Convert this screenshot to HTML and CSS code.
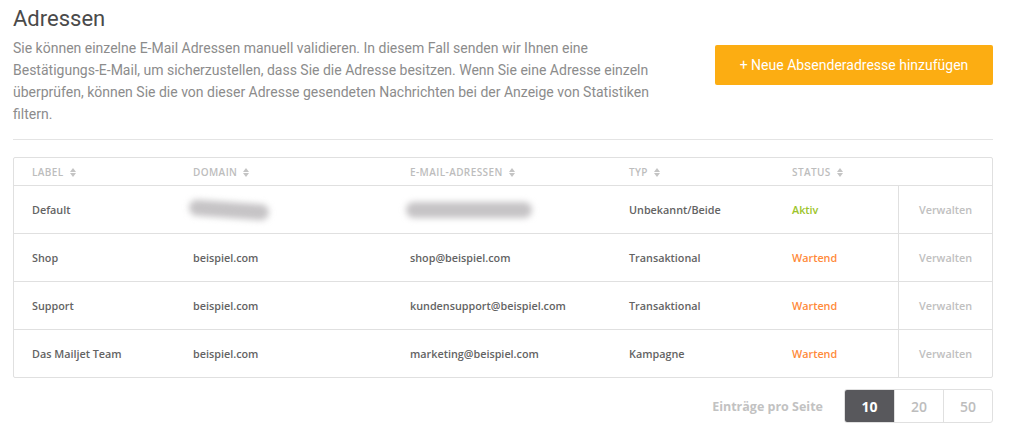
FILE: index.html
```html
<!DOCTYPE html>
<html lang="de">
<head>
<meta charset="utf-8">
<link rel="stylesheet" href="styles.css">
</head>
<body>
<div class="page">
  <div class="intro">
    <div class="intro-text">
      <h1 class="title">Adressen</h1>
      <p class="desc">Sie können einzelne E-Mail Adressen manuell validieren. In diesem Fall senden wir Ihnen eine<br>Bestätigungs-E-Mail, um sicherzustellen, dass Sie die Adresse besitzen. Wenn Sie eine Adresse einzeln<br>überprüfen, können Sie die von dieser Adresse gesendeten Nachrichten bei der Anzeige von Statistiken<br>filtern.</p>
    </div>
    <button class="add-btn">+ Neue Absenderadresse hinzufügen</button>
  </div>
  <hr class="sep">
  <div class="table">
    <div class="row head">
      <div class="cell">LABEL <span class="sort"></span></div>
      <div class="cell">DOMAIN <span class="sort"></span></div>
      <div class="cell">E-MAIL-ADRESSEN <span class="sort"></span></div>
      <div class="cell">TYP <span class="sort"></span></div>
      <div class="cell">STATUS <span class="sort"></span></div>
      <div class="cell"></div>
    </div>
    <div class="row">
      <div class="cell">Default</div>
      <div class="cell"><span class="blur blur-domain"></span></div>
      <div class="cell"><span class="blur blur-mail"></span></div>
      <div class="cell">Unbekannt/Beide</div>
      <div class="cell ok">Aktiv</div>
      <div class="cell action">Verwalten</div>
    </div>
    <div class="row">
      <div class="cell">Shop</div>
      <div class="cell">beispiel.com</div>
      <div class="cell">shop@beispiel.com</div>
      <div class="cell">Transaktional</div>
      <div class="cell wait">Wartend</div>
      <div class="cell action">Verwalten</div>
    </div>
    <div class="row">
      <div class="cell">Support</div>
      <div class="cell">beispiel.com</div>
      <div class="cell">kundensupport@beispiel.com</div>
      <div class="cell">Transaktional</div>
      <div class="cell wait">Wartend</div>
      <div class="cell action">Verwalten</div>
    </div>
    <div class="row">
      <div class="cell">Das Mailjet Team</div>
      <div class="cell">beispiel.com</div>
      <div class="cell">marketing@beispiel.com</div>
      <div class="cell">Kampagne</div>
      <div class="cell wait">Wartend</div>
      <div class="cell action">Verwalten</div>
    </div>
  </div>
  <div class="pager">
    <span class="pager-label">Einträge pro Seite</span>
    <div class="pager-group">
      <span class="pg active">10</span>
      <span class="pg">20</span>
      <span class="pg">50</span>
    </div>
  </div>
</div>
</body>
</html>
```
FILE: styles.css
```css
* { box-sizing: border-box; }
html, body { margin: 0; background: #fff; }
.page {
  padding: 0 18px 0 13px;
  font-family: Roboto, "Liberation Sans", sans-serif;
}
.intro {
  display: flex;
  justify-content: space-between;
  align-items: flex-start;
}
.title {
  margin: 4px 0 0;
  font-size: 22px;
  font-weight: 400;
  color: #4a4a4a;
  line-height: 30px;
}
.desc {
  margin: 3px 0 0;
  font-size: 14px;
  line-height: 22px;
  color: #8c8c8c;
}
.add-btn {
  margin-top: 45px;
  width: 278px;
  height: 40px;
  border: 0;
  border-radius: 2px;
  background: #fcad12;
  color: #fff;
  font-family: Roboto, "Liberation Sans", sans-serif;
  font-size: 14px;
  padding: 0;
}
.sep {
  margin: 14px 0 17px;
  border: 0;
  border-top: 1px solid #e4e4e4;
}
.table {
  border: 1px solid #e0e0e0;
  border-radius: 2px;
  font-family: "Open Sans", "DejaVu Sans", sans-serif;
}
.row {
  display: grid;
  grid-template-columns: 161px 217px 219px 163px 124px 1fr;
  height: 48px;
  border-top: 1px solid #e0e0e0;
  font-size: 10.8px;
  font-weight: 600;
  color: #636363;
}
.row.head {
  border-top: 0;
  height: 27px;
  font-size: 10px;
  color: #bdbdbd;
  font-weight: 600;
  letter-spacing: 0.4px;
}
.cell {
  display: flex;
  align-items: center;
  padding-left: 18px;
  white-space: nowrap;
}
.head .cell { padding-top: 1px; }
.sort {
  display: inline-block;
  margin-left: 6px;
  width: 6px;
  height: 9px;
  position: relative;
}
.sort::before, .sort::after {
  content: "";
  position: absolute;
  left: 0;
  border-left: 3px solid transparent;
  border-right: 3px solid transparent;
}
.sort::before { top: 0; border-bottom: 4px solid #c4c4c4; }
.sort::after { bottom: 0; border-top: 4px solid #c4c4c4; }
.ok { color: #9cc42a; }
.wait { color: #ff8a3a; }
.action {
  border-left: 1px solid #e0e0e0;
  justify-content: center;
  padding-left: 0;
  color: #c0c0c0;
  font-weight: 600;
}
.blur {
  display: block;
  height: 16px;
  background: #c6c4c6;
  border-radius: 8px;
  filter: blur(3px);
}
.blur-domain { width: 80px; margin-left: -4px; transform: rotate(4deg); }
.blur-mail { width: 126px; margin-left: -4px; }
.pager {
  display: flex;
  justify-content: flex-end;
  align-items: center;
  margin-top: 11px;
}
.pager-label {
  font-family: "Open Sans", "DejaVu Sans", sans-serif;
  font-weight: 700;
  font-size: 12.5px;
  color: #c2c2c2;
  margin-right: 21px;
}
.pager-group {
  display: flex;
  border: 1px solid #e0e0e0;
  border-radius: 3px;
  overflow: hidden;
}
.pg {
  width: 49px;
  height: 32px;
  display: flex;
  align-items: center;
  justify-content: center;
  font-family: "Open Sans", "DejaVu Sans", sans-serif;
  font-weight: 600;
  font-size: 14px;
  color: #bdbdbd;
  border-left: 1px solid #e0e0e0;
}
.pg:first-child { border-left: 0; }
.pg.active { background: #58585c; color: #fff; font-weight: 700; }
```
